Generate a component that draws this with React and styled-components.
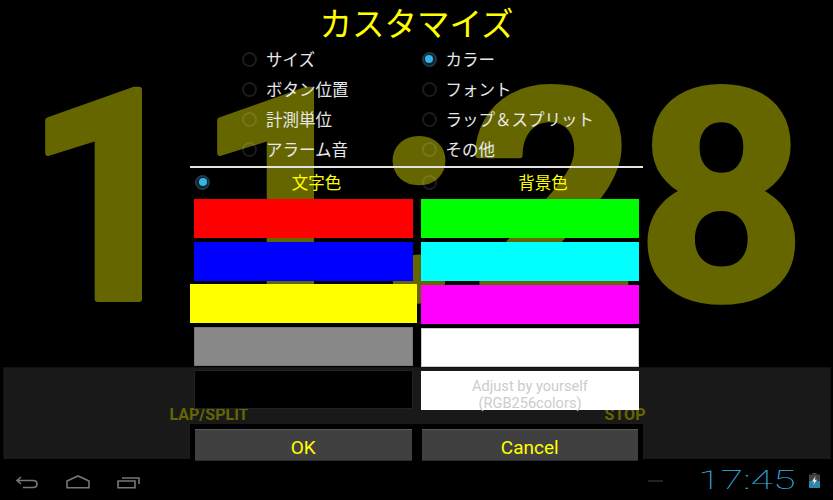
import React from 'react'
import styled, { createGlobalStyle } from 'styled-components'

const GlobalStyle = createGlobalStyle`
  html, body {
    margin: 0;
    padding: 0;
    background: #000;
  }
  * {
    box-sizing: border-box;
  }
`

const CJK = '"Noto Sans CJK JP", "Noto Sans", sans-serif'

const Screen = styled.div`
  position: relative;
  width: 833px;
  height: 500px;
  overflow: hidden;
  background: #000;
  display: flex;
  flex-direction: column;
  font-family: Roboto, sans-serif;
`

// the huge running clock behind everything, stroked so the digits get round corners
const BigClock = styled.svg`
  position: absolute;
  top: 0;
  left: 0;

  text {
    font-family: Roboto, sans-serif;
    font-weight: 700;
    font-size: 294px;
    fill: #666600;
    stroke: #666600;
    stroke-width: 6px;
    stroke-linejoin: round;
  }
`

const Stage = styled.div`
  position: relative;
  flex: 1;
  display: flex;
  flex-direction: column;
  justify-content: flex-end;
  padding: 0 3px 0 4px;
`

const ControlPanel = styled.div`
  position: relative;
  height: 91px;
  display: flex;
  background: #191919;
  box-shadow: 0 0 0 1px #111;
`

const ControlLabel = styled.div`
  flex: 1;
  padding: 37px ${p => p.$inset || 0}px 0 0;
  text-align: center;
  font-size: 16px;
  line-height: 20px;
  font-weight: 700;
  color: #666600;
`

const Dialog = styled.div`
  position: absolute;
  top: 0;
  left: 190px;
  width: 453px;
  display: flex;
  flex-direction: column;
`

const Title = styled.h1`
  margin: 0;
  height: 44px;
  text-align: center;
  font-family: ${CJK};
  font-size: 32.5px;
  line-height: 44px;
  font-weight: 400;
  color: #ffff00;
`

const OptionGrid = styled.div`
  display: grid;
  grid-template-columns: 179.5px 179.5px;
  grid-auto-rows: 30px;
  padding-left: 52px;
`

const Option = styled.div`
  display: flex;
  align-items: center;
  gap: 9px;
  font-family: ${CJK};
  font-size: 16.5px;
  color: #e8e8e8;
`

const Radio = styled.span`
  position: relative;
  flex: none;
  width: 15px;
  height: 15px;
  border-radius: 50%;
  border: 2px solid ${p => (p.$on ? '#1d3a47' : 'rgba(255, 255, 255, 0.11)')};
  background: ${p => (p.$on ? '#102029' : 'transparent')};

  &::after {
    content: '';
    display: ${p => (p.$on ? 'block' : 'none')};
    position: absolute;
    top: 1.5px;
    left: 1.5px;
    width: 8px;
    height: 8px;
    border-radius: 50%;
    background: #33b5e5;
  }
`

const Divider = styled.div`
  height: 2px;
  margin-top: 2px;
  background: #e4e4e4;
`

const Columns = styled.div`
  display: grid;
  grid-template-columns: 227px 226px;
`

const Column = styled.div`
  display: flex;
  flex-direction: column;
  gap: 4px;
  padding: 0 4px;
`

const ColumnHeader = styled.div`
  height: 27px;
  display: flex;
  align-items: center;
  padding: 1px 0 0 1px;
`

const RadioSlot = styled.div`
  flex: none;
  width: 25px;
`

const ColumnLabel = styled.div`
  flex: 1;
  text-align: center;
  font-family: ${CJK};
  font-size: 16.5px;
  color: #ffff00;
`

const Swatch = styled.div`
  height: 39px;
  background: ${p => p.$color};
  margin: ${p => (p.$selected ? '-1px -4px 0' : '0')};
  box-shadow: ${p => (p.$outline ? `inset 0 0 0 1px ${p.$outline}` : 'none')};
  text-align: center;
  font-size: 14.6px;
  line-height: 17px;
  padding-top: 7px;
  color: #cccccc;
  white-space: nowrap;
`

const ButtonBar = styled.div`
  position: relative;
  height: 40px;
  margin-top: 14px;
  padding: 5px 5px 0;
  display: flex;
  gap: 10px;
  background: #000;
`

const DialogButton = styled.button`
  flex: 1;
  height: 32px;
  padding: 4px 0 0;
  border: 0;
  border-top: 1px solid #595959;
  border-bottom: 1px solid #2c2c2c;
  background: #404040;
  color: #ffff00;
  font-family: Roboto, sans-serif;
  font-size: 19px;
`

const NavBar = styled.div`
  position: relative;
  height: 41px;
  display: flex;
  align-items: center;
  background: #000;
`

const NavIcon = styled.svg`
  display: block;
  fill: none;
  stroke: #777;
  stroke-width: 1.6;
`

const NavButtons = styled.div`
  flex: 1;
  display: flex;
  align-items: center;
  padding: 5px 0 0 1px;
`

const NavSlot = styled.div`
  width: 51px;
  display: flex;
  justify-content: center;
`

const StatusArea = styled.div`
  display: flex;
  align-items: center;
  padding: 2px 13px 0 0;
`

const StatusDash = styled.div`
  width: 15px;
  height: 2px;
  margin-right: 35px;
  background: #222;
`

const StatusTime = styled.div`
  width: 62px;
  margin-right: 49px;
  font-size: 25px;
  line-height: 28px;
  font-weight: 100;
  color: #33b5e5;
  white-space: nowrap;
  transform: scaleX(1.65);
  transform-origin: left center;
`

const swatchesLeft = [
  { color: '#ff0000' },
  { color: '#0000ff' },
  { color: '#ffff00', selected: true },
  { color: '#888888', outline: '#777' },
  { color: '#000000', outline: '#222' },
]

const swatchesRight = [
  { color: '#00ff00' },
  { color: '#00ffff' },
  { color: '#ff00ff' },
  { color: '#ffffff', outline: '#ccc' },
]

const options = [
  ['サイズ', false],
  ['カラー', true],
  ['ボタン位置', false],
  ['フォント', false],
  ['計測単位', false],
  ['ラップ＆スプリット', false],
  ['アラーム音', false],
  ['その他', false],
]

const App = () => {
  return (
    <Screen>
      <GlobalStyle />
      <BigClock width="833" height="500" viewBox="0 0 833 500">
        <text x="24 196 378 468 637" y="299">11:28</text>
      </BigClock>
      <Stage>
        <ControlPanel>
          <ControlLabel $inset={6}>LAP/SPLIT</ControlLabel>
          <ControlLabel>STOP</ControlLabel>
        </ControlPanel>
      </Stage>
      <NavBar>
        <NavButtons>
          <NavSlot>
            <NavIcon width="24" height="14" viewBox="0 0 24 14">
              <path d="M6 2 L2 5.5 L6 9 M2 5.5 H18 Q22 5.5 22 9 Q22 12.5 18 12.5 H8" />
            </NavIcon>
          </NavSlot>
          <NavSlot>
            <NavIcon width="24" height="14" viewBox="0 0 24 14">
              <path d="M1 12.8 V6 L12 1 L23 6 V12.8 Z" />
            </NavIcon>
          </NavSlot>
          <NavSlot>
            <NavIcon width="23" height="14" viewBox="0 0 23 14">
              <path d="M1 6 H18 V12.8 H1 Z M5 3 H22 V9" />
            </NavIcon>
          </NavSlot>
        </NavButtons>
        <StatusArea>
          <StatusDash />
          <StatusTime>17:45</StatusTime>
          <svg width="11" height="15" viewBox="0 0 11 15">
            <rect x="3.5" y="0" width="4" height="1.5" fill="#555" />
            <rect x="0" y="1.5" width="11" height="13.5" fill="#444" />
            <rect x="0" y="8" width="11" height="7" fill="#2a86ad" />
            <path d="M6.5 3 L3 8.5 H5.2 L4.4 12 L8 6.8 H5.8 Z" fill="#eee" />
          </svg>
        </StatusArea>
      </NavBar>
      <Dialog>
        <Title>カスタマイズ</Title>
        <OptionGrid>
          {options.map(([label, on]) => (
            <Option key={label}>
              <Radio $on={on} />
              {label}
            </Option>
          ))}
        </OptionGrid>
        <Divider />
        <Columns>
          <Column>
            <ColumnHeader>
              <RadioSlot><Radio as="div" $on /></RadioSlot>
              <ColumnLabel>文字色</ColumnLabel>
            </ColumnHeader>
            {swatchesLeft.map(s => (
              <Swatch key={s.color} $color={s.color} $selected={s.selected} $outline={s.outline} />
            ))}
          </Column>
          <Column>
            <ColumnHeader>
              <RadioSlot><Radio as="div" /></RadioSlot>
              <ColumnLabel>背景色</ColumnLabel>
            </ColumnHeader>
            {swatchesRight.map(s => (
              <Swatch key={s.color} $color={s.color} $outline={s.outline} />
            ))}
            <Swatch $color="#ffffff">
              Adjust by yourself
              <br />
              (RGB256colors)
            </Swatch>
          </Column>
        </Columns>
        <ButtonBar>
          <DialogButton>OK</DialogButton>
          <DialogButton>Cancel</DialogButton>
        </ButtonBar>
      </Dialog>
    </Screen>
  )
}

export default App
